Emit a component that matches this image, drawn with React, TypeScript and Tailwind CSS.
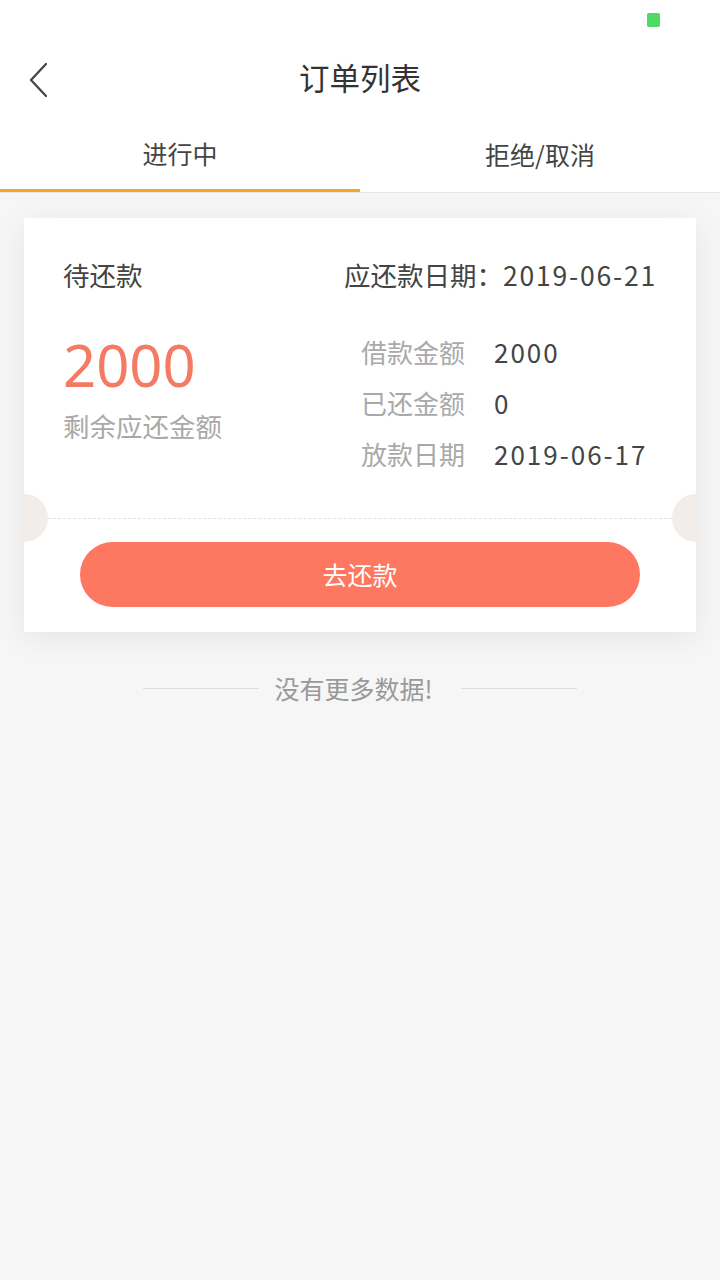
export default function App() {
  const rows = [
    { label: '借款金额', value: '2000' },
    { label: '已还金额', value: '0' },
    { label: '放款日期', value: '2019-06-17' },
  ];

  return (
    <div
      className="min-h-[1280px] w-[720px] bg-[#f7f6f6]"
      style={{ fontFamily: '"Noto Sans CJK SC", "Noto Sans", sans-serif' }}
    >
      {/* status bar */}
      <div className="flex h-[40px] items-center justify-end bg-white pr-[60px]">
        <div className="h-[14px] w-[13px] rounded-[2px] bg-[#4cd964]" />
      </div>

      {/* header */}
      <div className="relative flex h-[78px] items-center justify-center bg-white pb-[4px]">
        <button className="absolute left-[26px] top-[22px] text-[#444]" aria-label="back">
          <svg width="24" height="36" viewBox="0 0 24 36" fill="none">
            <path d="M20 2L5 18l15 16" stroke="currentColor" strokeWidth="2.2" strokeLinecap="round" strokeLinejoin="round" />
          </svg>
        </button>
        <h1 className="text-[30.5px] leading-none text-[#333]">订单列表</h1>
      </div>

      {/* tabs */}
      <div className="flex h-[75px] border-b border-[#e6e6e6] bg-white">
        <div className="flex flex-1 items-center justify-center border-b-[3px] border-[#f5a623] text-[25px] text-[#444]">
          进行中
        </div>
        <div className="flex flex-1 items-center justify-center text-[25px] text-[#444]">
          拒绝/取消
        </div>
      </div>

      {/* card */}
      <div className="px-[24px] pt-[25px]">
        <div className="relative overflow-hidden bg-white shadow-[0_6px_30px_rgba(0,0,0,0.07)]">
          <div className="px-[39px] pt-[39px] pb-[46px]">
            <div className="flex items-center justify-between text-[26.5px] leading-[36px] text-[#444]">
              <span>待还款</span>
              <span>
                应还款日期：<span className="tracking-[1.8px]">2019-06-21</span>
              </span>
            </div>
            <div className="mt-[41px] flex justify-between">
              <div>
                <div className="text-[58px] leading-[62px] text-[#f47a63]" style={{ fontFamily: '"Noto Sans", sans-serif' }}>2000</div>
                <div className="mt-[12px] text-[26.5px] leading-[36px] text-[#a9a9a9]">剩余应还金额</div>
              </div>
              <div className="flex w-[296px] flex-col gap-[15px]">
                {rows.map((r) => (
                  <div key={r.label} className="flex text-[26px] leading-[36px]">
                    <span className="w-[133px] text-[#a9a9a9]">{r.label}</span>
                    <span className="tracking-[2px] text-[#444]">{r.value}</span>
                  </div>
                ))}
              </div>
            </div>
          </div>

          <div className="relative h-0">
            <div className="absolute -left-[24px] -top-[24px] h-[48px] w-[48px] rounded-full bg-[#f0edeb]" />
            <div className="absolute -right-[24px] -top-[24px] h-[48px] w-[48px] rounded-full bg-[#f0edeb]" />
            <div className="mx-[24px] border-t border-dashed border-[#e2e2e2]" />
          </div>

          <div className="px-[56px] pt-[24px] pb-[25px]">
            <button className="flex h-[65px] w-full items-center justify-center rounded-full bg-[#fd7761] text-[25px] text-white">
              去还款
            </button>
          </div>
        </div>
      </div>

      {/* no more */}
      <div className="mt-[40px] flex items-center justify-center">
        <div className="h-px w-[116px] bg-[#dddddd]" />
        <span className="ml-[15px] mr-[28px] text-[25px] leading-[32px] text-[#999]">没有更多数据!</span>
        <div className="h-px w-[116px] bg-[#dddddd]" />
      </div>
    </div>
  );
}
